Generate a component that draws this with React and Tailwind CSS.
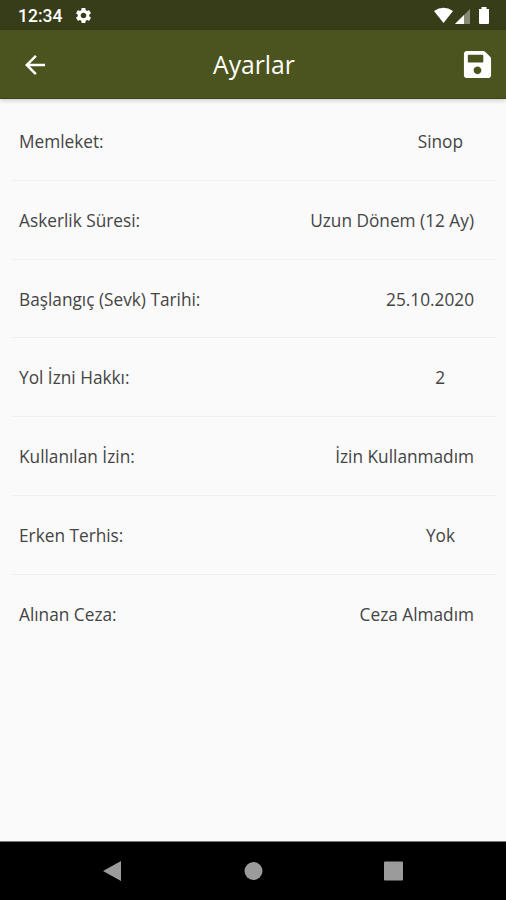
import { FaSave } from 'react-icons/fa'
import { MdArrowBack, MdSettings } from 'react-icons/md'

const ROWS = [
  { label: 'Memleket:', value: 'Sinop', pad: 'pr-[33px]' },
  { label: 'Askerlik Süresi:', value: 'Uzun Dönem (12 Ay)', pad: 'pr-[22px]' },
  { label: 'Başlangıç (Sevk) Tarihi:', value: '25.10.2020', pad: 'pr-[22px]' },
  { label: 'Yol İzni Hakkı:', value: '2', pad: 'pr-[51px]' },
  { label: 'Kullanılan İzin:', value: 'İzin Kullanmadım', pad: 'pr-[22px]' },
  { label: 'Erken Terhis:', value: 'Yok', pad: 'pr-[41px]' },
  { label: 'Alınan Ceza:', value: 'Ceza Almadım', pad: 'pr-[22px]' },
]

function StatusBar() {
  return (
    <div className="flex h-[30px] items-center bg-[#383d19] pl-[18px] pr-[15px] pt-px text-white">
      <span className="pt-[2px] font-['Roboto',sans-serif] text-[17.5px] font-medium leading-none">12:34</span>
      <MdSettings size={19} className="ml-[12px]" />
      <svg className="ml-auto" width="57" height="20" viewBox="0 0 57 20">
        <path d="M0 5 Q9.500 -1.500 19 5 L9.500 17 Z" fill="#fff" />
        <path d="M36 3 V18 H21 Z" fill="#fff" opacity=".4" />
        <path d="M30 9 V18 H21 Z" fill="#fff" />
        <path d="M45 3 h2.500 v-2 h5 v2 h2.500 v14 q0 1 -1 1 h-8 q-1 0 -1 -1 z" fill="#fff" />
      </svg>
    </div>
  )
}

function Header() {
  return (
    <div className="z-10 flex h-[69px] items-center justify-between border-b border-[#3b4416] bg-[#4b541e] pl-[20px] pr-[13px] text-white shadow-[0_1px_5px_rgba(0,0,0,0.22)]">
      <MdArrowBack size={30} className="mt-px" />
      <h1 className="pr-[4px] pt-[2px] text-[24.7px] leading-none">Ayarlar</h1>
      <FaSave size={31} className="mt-px" />
    </div>
  )
}

function NavBar() {
  return (
    <div className="flex h-[59px] items-center justify-center border-t border-[#777] bg-black">
      <svg width="302" height="24" viewBox="0 0 302 24" fill="#9b9b9b">
        <path d="M1 12 L19 2 V22 Z" />
        <circle cx="151.500" cy="12" r="9" />
        <rect x="282" y="2.500" width="19" height="19" rx="1" />
      </svg>
    </div>
  )
}

export default function App() {
  return (
    <div className="flex h-[900px] w-[506px] flex-col overflow-hidden bg-[#fafafa] font-['Open_Sans',sans-serif] text-[#444]">
      <StatusBar />
      <Header />
      <main className="flex-1 pl-3 pr-[10px] pt-[3px]">
        {ROWS.map(row => (
          <div
            key={row.label}
            className="flex h-[78.8px] items-center justify-between border-b border-[#f0f0f0] pl-[7px] pt-[2px] text-[17.25px] last:border-b-0"
          >
            <span>{row.label}</span>
            <span className={row.pad}>{row.value}</span>
          </div>
        ))}
      </main>
      <NavBar />
    </div>
  )
}
